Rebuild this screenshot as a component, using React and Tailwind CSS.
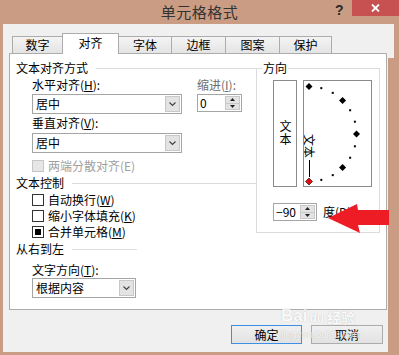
import React from "react";

function Check({ checked, mixed, disabled, label }) {
    return (
        <div className="flex items-center h-[16px] pl-[16px]">
            <div
                className={`w-[12px] h-[12px] border flex items-center justify-center ${
                    disabled ? "border-[#c6c6c6] bg-[#e6e6e6]" : "border-[#333] bg-white"
                }`}
            >
                {mixed && <div className="w-[6px] h-[6px] bg-black" />}
                {checked && <div className="w-[6px] h-[6px] bg-black" />}
            </div>
            <span className={`ml-[4px] ${disabled ? "text-[#a0a0a0]" : ""}`}>{label}</span>
        </div>
    );
}

function Select({ value, className }) {
    return (
        <div className={`flex h-[20px] border border-[#a5a5a5] bg-white ${className}`}>
            <div className="flex-1 pl-[3px] leading-[18px]">{value}</div>
            <div className="w-[15px] m-[1px] bg-[#e3e3e3] border border-[#c8c8c8] flex items-center justify-center">
                <svg width="7" height="5" viewBox="0 0 7 5">
                    <path d="M0.5 0.5 L3.5 3.5 L6.5 0.5" stroke="#444" strokeWidth="1.2" fill="none" />
                </svg>
            </div>
        </div>
    );
}

function Spin({ value, className }) {
    return (
        <div className={`flex h-[18px] border border-[#a5a5a5] bg-white ${className}`}>
            <div className="flex-1 pl-[2px] leading-[16px]">{value}</div>
            <div className="w-[15px] m-[1px] flex flex-col bg-[#e3e3e3] border border-[#c8c8c8]">
                <div className="flex-1 flex items-center justify-center border-b border-[#c8c8c8]">
                    <svg width="5" height="3" viewBox="0 0 5 3"><path d="M0 3 L2.5 0 L5 3 Z" fill="#222" /></svg>
                </div>
                <div className="flex-1 flex items-center justify-center">
                    <svg width="5" height="3" viewBox="0 0 5 3"><path d="M0 0 L2.5 3 L5 0 Z" fill="#222" /></svg>
                </div>
            </div>
        </div>
    );
}

function Header({ text, lineClass }) {
    return (
        <div className="flex items-center h-[16px]">
            <span>{text}</span>
            <div className={`ml-[8px] h-px bg-[#dcdcdc] ${lineClass}`} />
        </div>
    );
}

function Dial() {
    const cx = 5, cy = 53, r = 47.5;
    const marks = [];
    for (let a = 90; a >= -90; a -= 15) {
        const rad = (a * Math.PI) / 180;
        const x = cx + r * Math.cos(rad);
        const y = cy - r * Math.sin(rad);
        if (a % 45 === 0) {
            const red = a === -90;
            marks.push(
                <path
                    key={a}
                    d={`M${x} ${y - 3.5} L${x + 3.5} ${y} L${x} ${y + 3.5} L${x - 3.5} ${y} Z`}
                    fill={red ? "#e01010" : "#000"}
                    stroke={red ? "#000" : "none"}
                    strokeWidth="0.6"
                />
            );
        } else {
            marks.push(<rect key={a} x={x - 1} y={y - 1} width="2" height="2" fill="#000" />);
        }
    }
    return (
        <svg className="absolute inset-0" width="67" height="105">
            <line x1="5.5" y1="79" x2="5.5" y2="96" stroke="#000" strokeWidth="1" />
            {marks}
        </svg>
    );
}

const tabs = [
    { name: "数字", w: "w-[51px]" },
    { name: "对齐", w: "w-[57px]", active: true },
    { name: "字体", w: "w-[54px]" },
    { name: "边框", w: "w-[55px]" },
    { name: "图案", w: "w-[55px]" },
    { name: "保护", w: "w-[53px]" },
];

export default function App() {
    return (
        <div className="relative w-[399px] h-[355px] overflow-hidden bg-[#c99c83] font-['Noto_Sans_CJK_SC',sans-serif] text-[12px] text-black">
            {/* title bar */}
            <div className="relative h-[24px] flex items-center justify-center">
                <span className="text-[15px] text-[#333] tracking-[0.5px]">单元格格式</span>
                <span className="absolute left-[335px] top-[0px] text-[14px] font-bold text-[#2a2a2a] font-['Liberation_Sans',sans-serif]">?</span>
                <div className="absolute right-0 top-0 w-[47px] h-[16px] bg-[#c75050] flex items-center justify-center">
                    <svg width="9" height="8" viewBox="0 0 9 8">
                        <path d="M1 0.5 L8 7.5 M8 0.5 L1 7.5" stroke="#fff" strokeWidth="1.8" />
                    </svg>
                </div>
            </div>

            {/* client area */}
            <div className="ml-[3px] w-[385px] h-[328px] bg-[#f0f0f0] pt-[9px] pl-[6px]">
                <div className="flex items-end h-[20px] ml-[3px]">
                    {tabs.map((t, i) => (
                        <div
                            key={t.name}
                            className={`${t.w} ${i > 0 ? "-ml-px" : ""} flex items-center justify-center border border-b-0 border-[#acacac] ${
                                t.active
                                    ? "h-[21px] -mb-px relative z-10 bg-white pb-[2px]"
                                    : "h-[17px] bg-gradient-to-b from-[#f4f4f4] to-[#e4e4e4]"
                            }`}
                        >
                            {t.name}
                        </div>
                    ))}
                </div>

                <div className="flex w-[378px] h-[257px] border border-[#acacac] bg-white pl-[6px]">
                    {/* left column */}
                    <div className="w-[240px] pt-[6px]">
                        <Header text="文本对齐方式" lineClass="flex-1" />
                        <div className="flex mt-[1px] pl-[16px]">
                            <div className="w-[150px]">
                                <div className="h-[16px] leading-[16px]">水平对齐(<u>H</u>):</div>
                                <Select value="居中" className="mt-[1px]" />
                                <div className="h-[16px] leading-[16px] mt-[1px]">垂直对齐(<u>V</u>):</div>
                                <Select value="居中" className="mt-[2px]" />
                            </div>
                            <div className="ml-[15px]">
                                <div className="h-[16px] leading-[16px] text-[#6d6d6d]">缩进(<u>I</u>):</div>
                                <Spin value="0" className="w-[45px] mt-[1px]" />
                            </div>
                        </div>
                        <div className="mt-[5px]">
                            <Check disabled label="两端分散对齐(E)" />
                        </div>
                        <div className="mt-[1px]">
                            <Header text="文本控制" lineClass="flex-1" />
                        </div>
                        <div className="mt-[1px]">
                            <Check label={<>自动换行(<u>W</u>)</>} />
                            <Check label={<>缩小字体填充(<u>K</u>)</>} />
                            <Check mixed label={<>合并单元格(<u>M</u>)</>} />
                        </div>
                        <div className="mt-[1px]">
                            <Header text="从右到左" lineClass="w-[65px]" />
                        </div>
                        <div className="pl-[16px] mt-[5px]">
                            <div className="h-[16px] leading-[16px]">文字方向(<u>T</u>):</div>
                            <Select value="根据内容" className="w-[104px]" />
                        </div>
                    </div>

                    {/* orientation group */}
                    <div className="relative mt-[14px] w-[124px] h-[165px] border border-[#dcdcdc] pl-[16px] pt-[11px]">
                        <span className="absolute -top-[9px] left-[5px] px-[1px] bg-white leading-[16px]">方向</span>
                        <div className="flex gap-[6px]">
                            <div className="w-[24px] h-[107px] border border-[#8a8a8a] flex items-center justify-center pb-[2px]">
                                <span className="[writing-mode:vertical-rl] leading-[12px] tracking-[1px]">文本</span>
                            </div>
                            <div className="relative w-[69px] h-[107px] border border-[#8a8a8a] overflow-hidden">
                                <Dial />
                                <span className="absolute left-[5px] top-[47px] h-[12px] leading-[12px] origin-left rotate-90 whitespace-nowrap">文本</span>
                            </div>
                        </div>
                        <div className="flex items-center mt-[16px]">
                            <Spin value="−90" className="w-[44px]" />
                            <span className="ml-[6px]">度(<u>D</u>)</span>
                        </div>
                    </div>
                </div>

                {/* buttons */}
                <div className="flex justify-end gap-[9px] mt-[15px] pr-[5px]">
                    <button className="w-[71px] h-[19px] border border-[#3c8fe6] bg-gradient-to-b from-[#f0f0f0] to-[#e2e2e2] leading-[17px]">确定</button>
                    <button className="w-[72px] h-[19px] border border-[#acacac] bg-gradient-to-b from-[#f0f0f0] to-[#e2e2e2] leading-[17px]">取消</button>
                </div>
            </div>

            {/* light strip of the frame at the top right */}
            <div className="absolute left-[388px] top-[24px] w-[6px] h-[34px] bg-[#f0f0f0]" />

            {/* watermark */}
            <div className="absolute left-[281px] top-[307px] pointer-events-none opacity-70">
                <div className="flex items-end text-white font-['Liberation_Sans',sans-serif] font-bold [text-shadow:0_0_1px_#9a9a9a]">
                    <span className="text-[17px] leading-[18px]">Bai</span>
                    <span className="text-[12px] leading-[14px] ml-[2px]">du</span>
                    <span className="text-[14px] leading-[16px] ml-[3px] font-['Noto_Sans_CJK_SC',sans-serif]">经验</span>
                </div>
                <div className="text-[10px] leading-[12px] text-white [text-shadow:0_0_1px_#9a9a9a] font-['Liberation_Sans',sans-serif] mt-[4px]">jingyan.baidu.com</div>
            </div>

            {/* red annotation arrow */}
            <svg className="absolute left-[326px] top-[202px]" width="64" height="33" viewBox="0 0 64 33">
                <path d="M2 16 L31 2 L32 8 L63 8 L63 23 L32 23 L34 31 Z" fill="#ee1c25" />
            </svg>
        </div>
    );
}
